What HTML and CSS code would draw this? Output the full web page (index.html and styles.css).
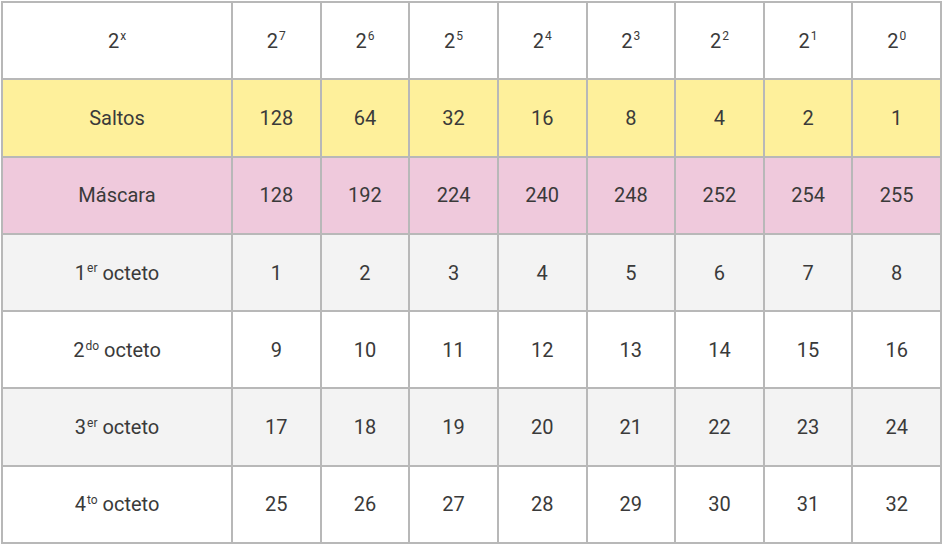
FILE: index.html
```html
<!DOCTYPE html>
<html lang="es">
<head>
<meta charset="utf-8">
<link rel="stylesheet" href="styles.css">
</head>
<body>
<table class="grid">
  <colgroup>
    <col class="c-label">
    <col><col><col><col><col><col><col><col>
  </colgroup>
  <tr class="r-head">
    <td>2<sup>x</sup></td>
    <td>2<sup>7</sup></td><td>2<sup>6</sup></td><td>2<sup>5</sup></td><td>2<sup>4</sup></td>
    <td>2<sup>3</sup></td><td>2<sup>2</sup></td><td>2<sup>1</sup></td><td>2<sup>0</sup></td>
  </tr>
  <tr class="r-saltos">
    <td>Saltos</td>
    <td>128</td><td>64</td><td>32</td><td>16</td><td>8</td><td>4</td><td>2</td><td>1</td>
  </tr>
  <tr class="r-mask">
    <td>Máscara</td>
    <td>128</td><td>192</td><td>224</td><td>240</td><td>248</td><td>252</td><td>254</td><td>255</td>
  </tr>
  <tr class="r-grey">
    <td>1<sup>er</sup> octeto</td>
    <td>1</td><td>2</td><td>3</td><td>4</td><td>5</td><td>6</td><td>7</td><td>8</td>
  </tr>
  <tr class="r-white">
    <td>2<sup>do</sup> octeto</td>
    <td>9</td><td>10</td><td>11</td><td>12</td><td>13</td><td>14</td><td>15</td><td>16</td>
  </tr>
  <tr class="r-grey">
    <td>3<sup>er</sup> octeto</td>
    <td>17</td><td>18</td><td>19</td><td>20</td><td>21</td><td>22</td><td>23</td><td>24</td>
  </tr>
  <tr class="r-white">
    <td>4<sup>to</sup> octeto</td>
    <td>25</td><td>26</td><td>27</td><td>28</td><td>29</td><td>30</td><td>31</td><td>32</td>
  </tr>
</table>
</body>
</html>
```
FILE: styles.css
```css
html, body {
  margin: 0;
  padding: 0;
  background: #ffffff;
}
body {
  padding: 1px 0 0 1px;
  font-family: Roboto, "Liberation Sans", Arial, sans-serif;
  color: #3a3a3a;
}
.grid {
  border-collapse: collapse;
  table-layout: fixed;
  width: 941px;
  font-size: 20px;
}
.grid .c-label {
  width: 230px;
}
.grid td {
  border: 2px solid #b8b8b8;
  height: 75.3px;
  padding: 0;
  text-align: center;
  vertical-align: middle;
  line-height: 22px;
}
.grid sup {
  font-size: 12px;
  line-height: 0;
  vertical-align: 0.6em;
  margin-left: 1px;
}
.r-head td { background: #ffffff; }
.r-saltos td { background: #fef09b; }
.r-mask td { background: #efc9dc; }
.r-grey td { background: #f3f3f3; }
.r-white td { background: #ffffff; }
```
